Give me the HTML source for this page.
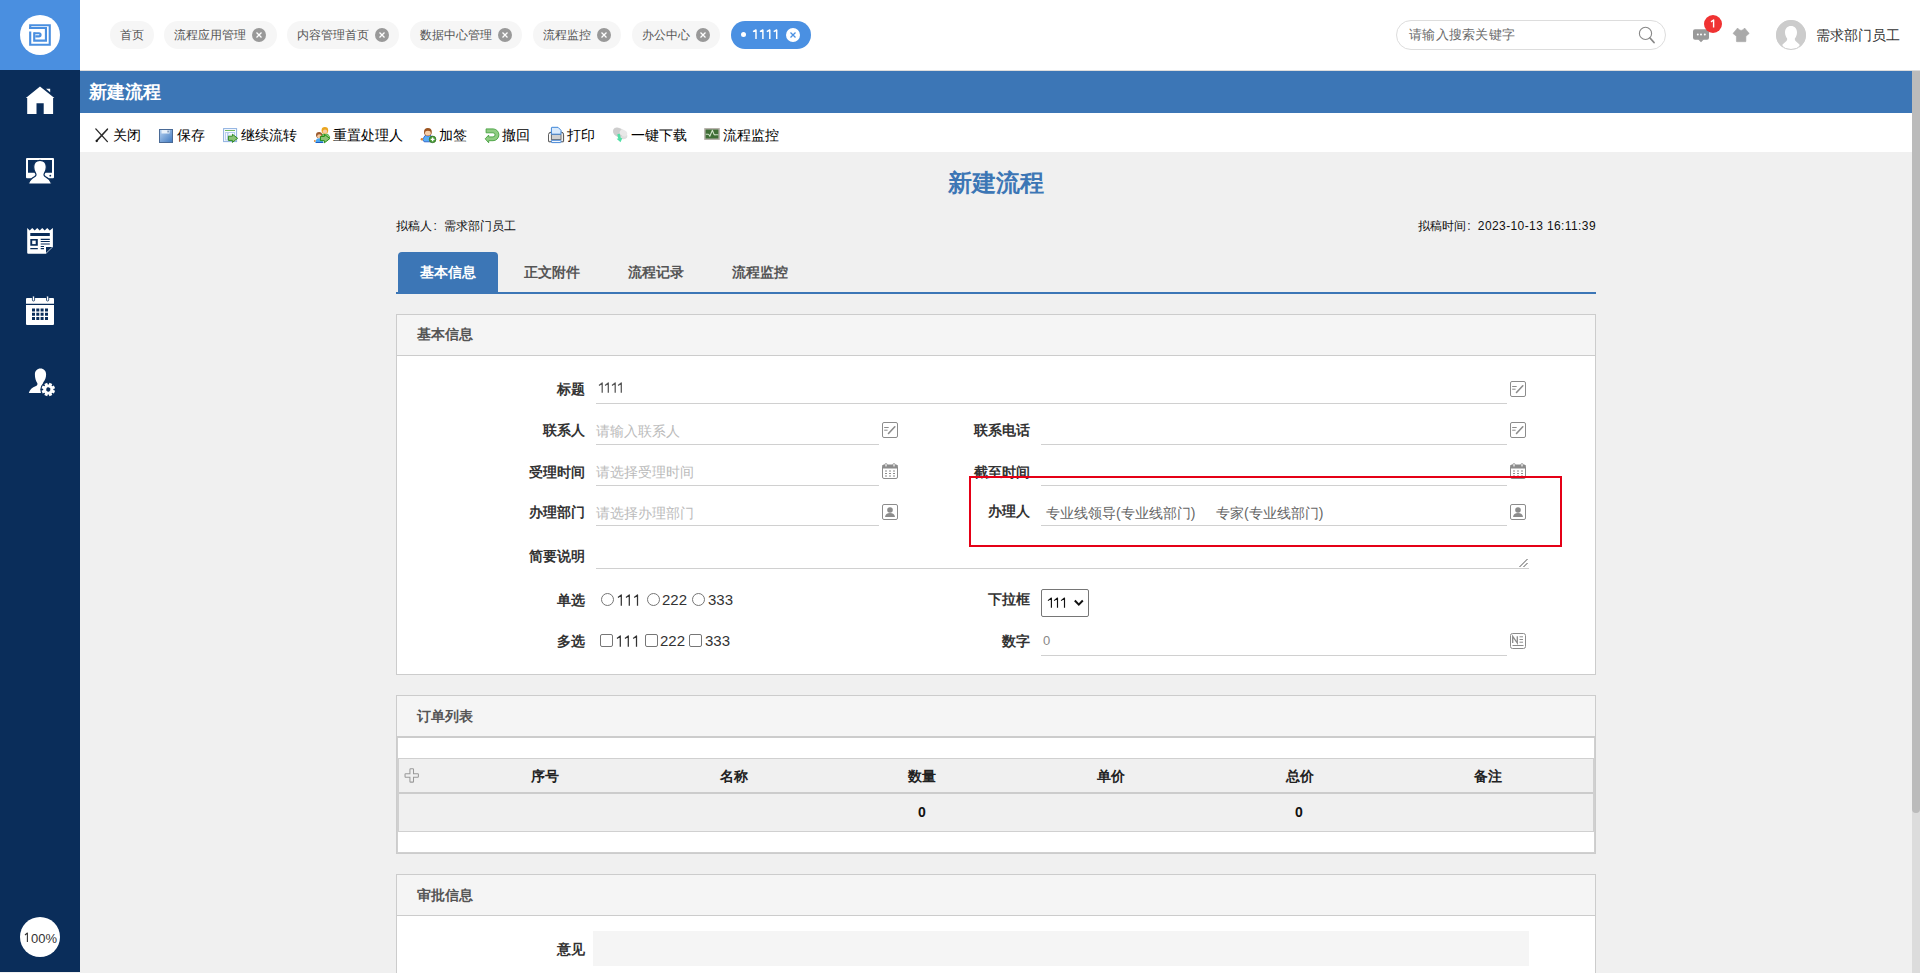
<!DOCTYPE html>
<html><head><meta charset="utf-8">
<style>
*{margin:0;padding:0;box-sizing:border-box}
html,body{width:1920px;height:973px;overflow:hidden;background:#f0f0f0;font-family:"Liberation Sans",sans-serif;color:#333}
.a{position:absolute}
.t{position:absolute;white-space:nowrap;line-height:1}
.tab{position:absolute;top:21px;height:28px;line-height:28px;border-radius:14px;background:#f6f6f6;color:#555;font-size:12px;padding-left:10px;white-space:nowrap}
.tab .x{position:absolute;top:7px;width:14px;height:14px;border-radius:50%;background:#999}
.tab .x svg{position:absolute;left:0;top:0}
.tb{position:absolute;top:128px;font-size:14px;line-height:14px;color:#000;white-space:nowrap}
.ic{position:absolute}
.lbl{position:absolute;font-size:14px;line-height:14px;font-weight:bold;color:#333;white-space:nowrap;text-align:right}
.ul{position:absolute;height:1px;background:#d0d0d0}
.ph{position:absolute;font-size:14px;line-height:14px;color:#bbb;white-space:nowrap}
.panel{position:absolute;left:396px;width:1200px;border:1px solid #ddd;background:#fff}
.ph2{position:absolute;left:0;top:0;width:100%;background:#f5f5f5;border-bottom:1px solid #ddd}
.sh{position:absolute;left:20px;font-size:14px;line-height:14px;font-weight:bold;color:#555;white-space:nowrap}
</style></head><body>
<!-- HEADER -->
<div class="a" style="left:0;top:0;width:1920px;height:70px;background:#fff"></div>
<div class="a" style="left:0;top:0;width:80px;height:70px;background:#4a8fe0"></div>
<div class="a" style="left:20px;top:15px;width:40px;height:40px;border-radius:50%;background:#fff"></div>
<svg class="a" style="left:0;top:0" width="80" height="70" viewBox="0 0 80 70">
<g fill="none" stroke="#4a8fe0" stroke-width="2.15">
<path d="M30.2 29.1 V25.2 H49.75 V44.75 H30.2 V31.5"/>
<path d="M29.14 28 H45.95 V40.65 H34.22 V32.2"/>
<path d="M34.22 33.25 H39 A1.55 1.55 0 0 1 39 36.35 H35.3"/>
</g>
</svg>
<div class="a" style="left:80px;top:70px;width:1840px;height:1px;background:#ddd"></div>

<div class="tab" style="left:110px;width:44px">首页</div>
<div class="tab" style="left:164px;width:113px">流程应用管理<span class="x" style="left:88px"><svg width="14" height="14"><path d="M4.5 4.5L9.5 9.5M9.5 4.5L4.5 9.5" stroke="#fff" stroke-width="1.3"/></svg></span></div>
<div class="tab" style="left:287px;width:112px">内容管理首页<span class="x" style="left:88px"><svg width="14" height="14"><path d="M4.5 4.5L9.5 9.5M9.5 4.5L4.5 9.5" stroke="#fff" stroke-width="1.3"/></svg></span></div>
<div class="tab" style="left:410px;width:112px">数据中心管理<span class="x" style="left:88px"><svg width="14" height="14"><path d="M4.5 4.5L9.5 9.5M9.5 4.5L4.5 9.5" stroke="#fff" stroke-width="1.3"/></svg></span></div>
<div class="tab" style="left:533px;width:88px">流程监控<span class="x" style="left:64px"><svg width="14" height="14"><path d="M4.5 4.5L9.5 9.5M9.5 4.5L4.5 9.5" stroke="#fff" stroke-width="1.3"/></svg></span></div>
<div class="tab" style="left:632px;width:88px">办公中心<span class="x" style="left:64px"><svg width="14" height="14"><path d="M4.5 4.5L9.5 9.5M9.5 4.5L4.5 9.5" stroke="#fff" stroke-width="1.3"/></svg></span></div>
<div class="tab" style="left:731px;width:80px;background:#4a90e2;color:#fff;font-size:13px"><span class="a" style="left:10px;top:10.5px;width:5px;height:5px;border-radius:50%;background:#fff"></span><span class="x" style="left:55px;background:#fff"><svg width="14" height="14"><path d="M4.5 4.5L9.5 9.5M9.5 4.5L4.5 9.5" stroke="#4a90e2" stroke-width="1.3"/></svg></span></div>

<svg class="a" style="left:751.30px;top:28.10px" width="28.70" height="12.90"><path d="M2.00 3.70L5.00 2.00V10.90M8.90 3.70L11.90 2.00V10.90M15.80 3.70L18.80 2.00V10.90M22.70 3.70L25.70 2.00V10.90" fill="none" stroke="#fff" stroke-width="1.45" stroke-linejoin="round"/></svg>
<div class="a" style="left:1396px;top:20px;width:270px;height:30px;border:1px solid #ddd;border-radius:15px;background:#fff"></div>
<div class="t" style="left:1409px;top:27.5px;font-size:13px;letter-spacing:0.3px;color:#6a6a6a">请输入搜索关键字</div>
<svg class="a" style="left:1636px;top:24px" width="22" height="22" viewBox="0 0 22 22"><circle cx="9.5" cy="9.4" r="6.1" fill="none" stroke="#888" stroke-width="1.1"/><path d="M14 14 L18 18.5" stroke="#888" stroke-width="1.8" stroke-linecap="round"/></svg>
<svg class="a" style="left:1690px;top:26px" width="22" height="20" viewBox="0 0 22 20"><rect x="3" y="3.3" width="16" height="10.5" rx="2" fill="#999"/><path d="M8 13.2 L11 16.3 L14 13.2Z" fill="#999"/><circle cx="7.8" cy="8.4" r="1" fill="#fff"/><circle cx="11" cy="8.4" r="1" fill="#fff"/><circle cx="14.8" cy="8.4" r="1" fill="#fff"/></svg>
<div class="a" style="left:1704px;top:15px;width:18px;height:18px;border-radius:50%;background:#f03232"></div><svg class="a" style="left:1708.70px;top:18.30px" width="7.60" height="11.60"><path d="M2.00 3.80L4.60 2.00V9.60" fill="none" stroke="#fff" stroke-width="1.4" stroke-linejoin="round"/></svg>
<svg class="a" style="left:1730px;top:26px" width="22" height="18" viewBox="0 0 22 18"><path d="M7.6 2 Q9 4.4 11.1 4.4 Q13.2 4.4 14.6 2 L19.2 7.4 L15.9 10.3 V15.2 Q15.9 15.7 15.4 15.7 H6.9 Q6.4 15.7 6.4 15.2 V10.3 L3 7.4 Z" fill="#aaa" stroke="#aaa" stroke-width="0.6" stroke-linejoin="round"/></svg>
<svg class="a" style="left:1776px;top:20px" width="30" height="30" viewBox="0 0 30 30"><defs><clipPath id="av"><circle cx="15" cy="15" r="15"/></clipPath></defs><circle cx="15" cy="15" r="15" fill="#ccc"/><g clip-path="url(#av)"><path d="M15 5.9 C18.6 5.9 21 8.5 21 12.3 C21 15 20 17 19 18.3 C18.6 19.3 18.8 20.3 19.8 21.2 L23.5 24.6 L23.5 31 L6.5 31 L6.5 24.6 L10.2 21.2 C11.2 20.3 11.4 19.3 11 18.3 C10 17 9 15 9 12.3 C9 8.5 11.4 5.9 15 5.9Z" fill="#fff"/></g><circle cx="15" cy="15" r="14.5" fill="none" stroke="#ccc" stroke-width="1"/></svg>
<div class="t" style="left:1816px;top:28px;font-size:14px;color:#333">需求部门员工</div>

<!-- SIDEBAR -->
<div class="a" style="left:0;top:70px;width:80px;height:902px;background:#0a2d5a"></div>

<!-- BLUE BAR -->
<div class="a" style="left:80px;top:71px;width:1832px;height:42px;background:#3c76b6"></div>
<div class="t" style="left:89px;top:83px;font-size:18px;font-weight:bold;color:#fff">新建流程</div>
<!-- TOOLBAR -->
<div class="a" style="left:80px;top:113px;width:1832px;height:39px;background:#fff"></div>

<!-- SCROLLBAR -->
<div class="a" style="left:1912px;top:71px;width:8px;height:902px;background:#dcdcdc"></div>
<div class="a" style="left:1912px;top:71px;width:8px;height:742px;background:#bbb;border-radius:0 0 4px 4px"></div>
<!-- SIDEBAR ICONS -->
<svg class="a" style="left:0;top:70px" width="80" height="340" viewBox="0 70 80 340">
<g fill="#fff">
<path d="M40 86.6 L25.8 98 L27.2 98 L27.2 114 L36.5 114 L36.5 103.3 L43.7 103.3 L43.7 114 L53.1 114 L53.1 98 L54.4 98 Z"/>
<path d="M46 88.8 L50.2 88.8 L50.2 92.2 Z"/>
<path fill-rule="evenodd" d="M27 158 H53 Q54 158 54 159 V177.2 Q54 178.2 53 178.2 H27 Q26 178.2 26 177.2 V159 Q26 158 27 158 Z M28 160 V172.8 H52 V160 Z"/>
<path d="M40 160.3 C43.5 160.3 46.3 162.8 46.3 167 C46.3 170 45.4 172 44.3 173.6 C43.7 174.6 44 175.9 45.5 176.7 C48.3 178.2 50.3 180 51.3 183 L51.3 184 L28.7 184 L28.7 183 C29.7 180 31.7 178.2 34.5 176.7 C36 175.9 36.3 174.6 35.7 173.6 C34.6 172 33.7 170 33.7 167 C33.7 162.8 36.5 160.3 40 160.3Z" stroke="#0a2d5a" stroke-width="1.2"/>
<circle cx="50.3" cy="175.7" r="0.9" fill="#0a2d5a"/>
<path fill-rule="evenodd" d="M27.2 228 L29.7 230.5 L32.2 228 L34.7 230.5 L37.2 228 L39.7 230.5 L42.2 228 L44.7 230.5 L47.2 228 L49.7 230.5 L52.9 228 V247 L46 253.7 H28.2 Q27.2 253.7 27.2 252.7 Z M30.3 233 V236 H49.8 V233 Z M30.3 239 V245.8 H37.8 V239 Z M40.7 238.8 V239.9 H49.8 V238.8Z M40.7 241 V242.1 H49.8 V241Z M40.7 243.4 V244.6 H49.8 V243.4Z M40.7 246 V247 H44 V246Z M40.7 248.1 V249.2 H44 V248.1Z M30.3 248.1 V249.2 H37.8 V248.1Z M46 247 V253 L52.2 247Z"/>
<rect x="32.2" y="240.6" width="3.5" height="3.5" fill="#fff"/>
<path fill-rule="evenodd" d="M27 298 H53 Q54 298 54 299 V303.8 H26 V299 Q26 298 27 298Z"/>
<rect x="32.4" y="296" width="2.2" height="5" rx="1" stroke="#0a2d5a" stroke-width="0.8"/>
<rect x="46.5" y="296" width="2.2" height="5" rx="1" stroke="#0a2d5a" stroke-width="0.8"/>
<path fill-rule="evenodd" d="M26 305 H54 V324 Q54 325 53 325 H27 Q26 325 26 324 Z M32 308.6 v3 h3 v-3z M36.3 308.6 v3 h3 v-3z M40.6 308.6 v3 h3 v-3z M45 308.6 v3 h3 v-3z M32 312.8 v3 h3 v-3z M36.3 312.8 v3 h3 v-3z M40.6 312.8 v3 h3 v-3z M45 312.8 v3 h3 v-3z M32 317 v3 h3 v-3z M36.3 317 v3 h3 v-3z M40.6 317 v3 h3 v-3z M45 317 v3 h3 v-3z"/>
<path d="M40.5 368.4 C43.8 368.4 46.1 370.8 46.1 374.5 C46.1 377.5 45 380 43.5 382 C42.8 383 43 384 43.5 385 L42 393 L28.8 393 C29.8 389.5 32 387.5 36 386 C37.5 385.3 37.8 384 37.2 383 C35.8 381 34.9 378 34.9 374.5 C34.9 370.8 37.2 368.4 40.5 368.4Z"/>
<circle cx="48.3" cy="389.5" r="8" fill="#0a2d5a"/>
<g transform="translate(48.3 389.5) rotate(22.5)"><path d="M4.88 -1.49 L6.72 -1.55 L6.72 1.55 L4.88 1.49 L4.50 2.39 L5.85 3.66 L3.66 5.85 L2.39 4.50 L1.49 4.88 L1.55 6.72 L-1.55 6.72 L-1.49 4.88 L-2.39 4.50 L-3.66 5.85 L-5.85 3.66 L-4.50 2.39 L-4.88 1.49 L-6.72 1.55 L-6.72 -1.55 L-4.88 -1.49 L-4.50 -2.39 L-5.85 -3.66 L-3.66 -5.85 L-2.39 -4.50 L-1.49 -4.88 L-1.55 -6.72 L1.55 -6.72 L1.49 -4.88 L2.39 -4.50 L3.66 -5.85 L5.85 -3.66 L4.50 -2.39Z"/><circle cx="0" cy="0" r="2.1" fill="#0a2d5a"/></g>
</g>
</svg>
<div class="a" style="left:20px;top:917px;width:40px;height:40px;border-radius:50%;background:#fff;color:#333;font-size:13px;line-height:40px;padding-top:1px;text-align:center"></div><svg class="a" style="left:22.90px;top:930.90px" width="7.40" height="13.10"><path d="M2.00 4.00L4.40 2.00V11.10" fill="none" stroke="#333" stroke-width="1.1" stroke-linejoin="round"/></svg><div class="t" style="left:31px;top:932px;font-size:13px;color:#333">00%</div>
<!-- TOOLBAR ITEMS -->
<svg class="a" style="left:94px;top:127px" width="16" height="17" viewBox="0 0 16 17"><path d="M1.8 1.9 L13.4 14.6" stroke="#2a2a2a" stroke-width="1.35" stroke-linecap="round"/><path d="M13.4 2.2 L2.6 13.9" stroke="#2a2a2a" stroke-width="1.6" stroke-linecap="round"/><circle cx="2.7" cy="14" r="1.15" fill="#1a1a1a"/></svg>
<div class="tb" style="left:113px">关闭</div>
<svg class="a" style="left:158px;top:128px" width="16" height="16" viewBox="0 0 16 16"><defs><linearGradient id="sv" x1="0" y1="0" x2="1" y2="1"><stop offset="0" stop-color="#b9d3f2"/><stop offset="1" stop-color="#3f78bf"/></linearGradient></defs><rect x="1.5" y="1.5" width="13" height="13" fill="url(#sv)" stroke="#4a6a96" stroke-width="1"/><rect x="3.5" y="2" width="8" height="3.5" fill="#e8f0fa"/><rect x="9.5" y="2.5" width="1.2" height="2" fill="#5a7aa6"/></svg>
<div class="tb" style="left:177px">保存</div>
<svg class="a" style="left:220px;top:124px" width="24" height="24" viewBox="0 0 24 24"><rect x="3.6" y="4.6" width="13" height="13" fill="#fbfdff" stroke="#8db0e0" stroke-width="1"/><rect x="5" y="6" width="10" height="1" fill="#72bb62"/><rect x="5.6" y="8.5" width="9" height="7.5" fill="none" stroke="#b5cdef" stroke-width="1"/><path d="M7.9 8.5V16" stroke="#b5cdef" stroke-width="1.6"/><path d="M8.2 10.5h3M8.2 12.5h3" stroke="#e6eefa" stroke-width="1"/><path d="M8.4 12.2 H12.4 V10.2 L17.6 14.3 L12.4 18.4 V16.4 H8.4 Z" fill="#8cc276" stroke="#2f8a22" stroke-width="1" stroke-linejoin="round"/></svg>
<div class="tb" style="left:241px">继续流转</div>
<svg class="a" style="left:310px;top:124px" width="24" height="24" viewBox="0 0 24 24"><path d="M12.3 10 H17.6 L19.6 12.6 V14 H12.3Z" fill="#8ad07a" stroke="#2f8a22" stroke-width="0.6"/><circle cx="14.9" cy="6.4" r="3.3" fill="#eaa51f"/><ellipse cx="15" cy="7.6" rx="2.2" ry="2" fill="#f6cba4"/><circle cx="9.1" cy="11" r="3.1" fill="#9a5a2e"/><ellipse cx="9.4" cy="12.2" rx="2.2" ry="2" fill="#f8cba4"/><path d="M5.2 19 Q5.6 14.4 9 14.2 Q12.4 14.4 13.4 19 Z" fill="#4aa6f2"/><path d="M6 18 H13.2 V19 H6Z" fill="#1f5cc0"/><circle cx="4.8" cy="17" r="0.9" fill="#e08a3a"/><path d="M10.4 12.4 H14.4 V10.3 L19.8 14.6 L14.4 18.8 V16.7 H10.4 Z" fill="#8cc276" stroke="#1f8a12" stroke-width="1" stroke-linejoin="round"/></svg>
<div class="tb" style="left:333px">重置处理人</div>
<svg class="a" style="left:416px;top:124px" width="24" height="24" viewBox="0 0 24 24"><path d="M6.6 15.4 L9.2 11.4 Q12 12.6 14.8 11.4 L16.8 14 V17 Q16.8 17.8 16 17.8 H8.8 Q7.8 17.8 7.5 17 Z" fill="#58aef6" stroke="#1f4fbf" stroke-width="0.8" stroke-linejoin="round"/><circle cx="5.9" cy="15.2" r="1.2" fill="#e0842e"/><circle cx="11.9" cy="8" r="3.9" fill="#9c5420"/><ellipse cx="11.9" cy="9.2" rx="2.9" ry="2.4" fill="#f7cfa8"/><circle cx="16.6" cy="15.4" r="3.3" fill="#4c9e3a" stroke="#2a6a1a" stroke-width="0.7"/><path d="M14.7 15.4h3.8M16.6 13.5v3.8" stroke="#fff" stroke-width="1.4"/></svg>
<div class="tb" style="left:439px">加签</div>
<svg class="a" style="left:484px;top:127px" width="17" height="18" viewBox="0 0 17 18"><path d="M2.1 1.9 H9 A5.9 5.9 0 0 1 9 13.7 H4.7 V15.8 L1.2 11.8 L4.7 8.1 V9.9 H9 A2.05 2.05 0 0 0 9 5.8 H2.1 Z" fill="#8fcc82" stroke="#46a040" stroke-width="0.9" stroke-linejoin="round"/></svg>
<div class="tb" style="left:502px">撤回</div>
<svg class="a" style="left:544px;top:124px" width="24" height="24" viewBox="0 0 24 24"><path d="M4.6 10.8 Q4.6 8.2 7 8.2 H17.4 Q19.6 8.2 19.6 10.8 V17.4 Q19.6 17.8 19.2 17.8 H5 Q4.6 17.8 4.6 17.4 Z" fill="#ececec" stroke="#3a3a3a" stroke-width="0.9"/><path d="M5.6 10 V16.5" stroke="#fff" stroke-width="1"/><rect x="7.4" y="10.6" width="9.6" height="4.8" fill="#cfcfcf" stroke="#5a5a5a" stroke-width="0.8"/><path d="M7.4 3.8 Q7.4 3.3 7.9 3.3 H14 L17 6.3 V10.2 H7.4 Z" fill="#d9eafc" stroke="#3f86d8" stroke-width="1"/><rect x="7.4" y="16.3" width="9.6" height="2.3" rx="0.6" fill="#f4f8fd" stroke="#4a8ad8" stroke-width="1"/></svg>
<div class="tb" style="left:567px">打印</div>
<svg class="a" style="left:608px;top:124px" width="24" height="24" viewBox="0 0 24 24"><g transform="rotate(33 12.5 9)"><ellipse cx="12.5" cy="9.5" rx="8" ry="4.6" fill="#dedede"/><ellipse cx="10" cy="9.8" rx="5.2" ry="4.2" fill="#cdcdcd"/><ellipse cx="15" cy="7.5" rx="4" ry="3" fill="#e8e8e8"/></g><path d="M10 10.2 Q11.2 9.5 12.6 10 L12.8 14.3 L14.2 14.8 L11.6 18.3 L8.5 14.2 L10.2 14.2 Z" fill="#52e0a6" transform="rotate(-12 11.5 14)"/></svg>
<div class="tb" style="left:631px">一键下载</div>
<svg class="a" style="left:700px;top:124px" width="24" height="20" viewBox="0 0 24 20"><rect x="4.9" y="4.8" width="14.2" height="10.4" fill="#3f6e36" stroke="#b3aea8" stroke-width="1.4"/><path d="M5.8 10.2 H8.3 Q9 10.3 9.8 12.2 L12.4 6.3 L14 10.4 Q14.5 11 15.6 10.8 H18.4" fill="none" stroke="#cfe2c8" stroke-width="1.1" stroke-linejoin="round"/></svg>
<div class="tb" style="left:723px">流程监控</div>

<!-- PAGE HEAD -->
<div class="t" style="left:948px;top:171px;font-size:24px;font-weight:bold;color:#3c76b5">新建流程</div>
<div class="t" style="left:396px;top:220px;font-size:12px;color:#111">拟稿人<span style="display:inline-block;width:12px;padding-left:1.5px">:</span>需求部门员工</div>
<div class="t" style="right:324px;top:220px;font-size:12px;color:#111">拟稿时间<span style="display:inline-block;width:12px;padding-left:1.5px">:</span><span style="letter-spacing:0.4px">2023-10-13 16:11:39</span></div>

<div class="a" style="left:398px;top:252px;width:100px;height:40px;background:#3c76b6;border-radius:4px 4px 0 0"></div>
<div class="t" style="left:420px;top:265px;font-size:14px;font-weight:bold;color:#fff">基本信息</div>
<div class="t" style="left:524px;top:265px;font-size:14px;font-weight:bold;color:#555">正文附件</div>
<div class="t" style="left:628px;top:265px;font-size:14px;font-weight:bold;color:#555">流程记录</div>
<div class="t" style="left:732px;top:265px;font-size:14px;font-weight:bold;color:#555">流程监控</div>
<div class="a" style="left:396px;top:292px;width:1200px;height:2px;background:#3c76b6"></div>
<!-- PANEL 1 -->
<div class="a" style="left:396px;top:314px;width:1200px;height:361px;border:1px solid #ccc;background:#fff"></div>
<div class="a" style="left:397px;top:315px;width:1198px;height:41px;background:#f5f5f5;border-bottom:1px solid #ccc"></div>
<div class="t" style="left:417px;top:327px;font-size:14px;font-weight:bold;color:#555">基本信息</div>

<div class="lbl" style="right:1335px;top:382px">标题</div>
<svg class="a" style="left:597.20px;top:381.20px" width="27.30" height="13.70"><path d="M2.00 4.60L5.20 2.00V11.70M8.10 4.60L11.30 2.00V11.70M15.00 4.60L18.20 2.00V11.70M21.10 4.60L24.30 2.00V11.70" fill="none" stroke="#555" stroke-width="1.25" stroke-linejoin="round"/></svg>
<div class="ul" style="left:596px;top:403px;width:911px"></div>

<div class="lbl" style="right:1335px;top:423px">联系人</div>
<div class="ph" style="left:596px;top:424px">请输入联系人</div>
<div class="ul" style="left:596px;top:444px;width:283px"></div>
<div class="lbl" style="right:890px;top:423px">联系电话</div>
<div class="ul" style="left:1041px;top:444px;width:466px"></div>

<div class="lbl" style="right:1335px;top:465px">受理时间</div>
<div class="ph" style="left:596px;top:465px">请选择受理时间</div>
<div class="ul" style="left:596px;top:485px;width:283px"></div>
<div class="lbl" style="right:890px;top:465px">截至时间</div>
<div class="ul" style="left:1041px;top:485px;width:466px"></div>

<div class="lbl" style="right:1335px;top:505px">办理部门</div>
<div class="ph" style="left:596px;top:506px">请选择办理部门</div>
<div class="ul" style="left:596px;top:525px;width:283px"></div>
<div class="lbl" style="right:890px;top:504px">办理人</div>
<div class="t" style="left:1046px;top:506px;font-size:14px;color:#666">专业线领导(专业线部门)</div>
<div class="t" style="left:1216px;top:506px;font-size:14px;color:#666">专家(专业线部门)</div>
<div class="ul" style="left:1041px;top:525px;width:466px"></div>

<div class="lbl" style="right:1335px;top:549px">简要说明</div>
<div class="ul" style="left:596px;top:568px;width:933px"></div>
<svg class="a" style="left:1518px;top:558px" width="11" height="10" viewBox="0 0 11 10"><path d="M1.5 9 L9.5 1 M5.5 9 L9.5 5" stroke="#555" stroke-width="1"/></svg>

<div class="lbl" style="right:1335px;top:593px">单选</div>
<div class="lbl" style="right:1335px;top:634px">多选</div>
<div class="lbl" style="right:890px;top:592px">下拉框</div>
<div class="lbl" style="right:890px;top:634px">数字</div>
<div class="t" style="left:1043px;top:634px;font-size:13px;color:#888">0</div>
<div class="ul" style="left:1041px;top:655px;width:466px"></div>

<!-- radios -->
<div class="a" style="left:601px;top:593px;width:13px;height:13px;border:1px solid #767676;border-radius:50%"></div>
<svg class="a" style="left:616.20px;top:593.20px" width="24.50" height="14.80"><path d="M2.00 4.50L5.30 2.00V12.80M10.00 4.50L13.30 2.00V12.80M18.20 4.50L21.50 2.00V12.80" fill="none" stroke="#333" stroke-width="1.25" stroke-linejoin="round"/></svg>
<div class="a" style="left:647px;top:593px;width:13px;height:13px;border:1px solid #767676;border-radius:50%"></div>
<div class="t" style="left:662px;top:592px;font-size:15px;color:#333">222</div>
<div class="a" style="left:692px;top:593px;width:13px;height:13px;border:1px solid #767676;border-radius:50%"></div>
<div class="t" style="left:708px;top:592px;font-size:15px;color:#333">333</div>
<!-- checkboxes -->
<div class="a" style="left:600px;top:634px;width:13px;height:13px;border:1px solid #767676;border-radius:2px"></div>
<svg class="a" style="left:615.40px;top:634.20px" width="24.50" height="14.80"><path d="M2.00 4.50L5.30 2.00V12.80M10.00 4.50L13.30 2.00V12.80M18.20 4.50L21.50 2.00V12.80" fill="none" stroke="#333" stroke-width="1.25" stroke-linejoin="round"/></svg>
<div class="a" style="left:645px;top:634px;width:13px;height:13px;border:1px solid #767676;border-radius:2px"></div>
<div class="t" style="left:660px;top:633px;font-size:15px;color:#333">222</div>
<div class="a" style="left:689px;top:634px;width:13px;height:13px;border:1px solid #767676;border-radius:2px"></div>
<div class="t" style="left:705px;top:633px;font-size:15px;color:#333">333</div>
<!-- select -->
<div class="a" style="left:1041px;top:589px;width:48px;height:28px;border:1px solid #767676;border-radius:2px;background:#fff"></div>
<svg class="a" style="left:1046.00px;top:596.20px" width="21.50" height="13.70"><path d="M2.00 4.60L5.40 2.00V11.70M8.10 4.60L11.50 2.00V11.70M15.10 4.60L18.50 2.00V11.70" fill="none" stroke="#111" stroke-width="1.15" stroke-linejoin="round"/></svg>
<svg class="a" style="left:1073px;top:599px" width="12" height="8" viewBox="0 0 12 8"><path d="M1.8 1.5 L5.8 5.6 L9.8 1.5" fill="none" stroke="#111" stroke-width="2"/></svg>

<!-- form icons -->
<svg class="a" style="left:1510px;top:381px" width="16" height="16" viewBox="0 0 16 16"><rect x="0.5" y="0.5" width="15" height="15" rx="1.5" fill="#fff" stroke="#8c8c8c"/><path d="M2.2 5.5h4.5M2.2 8.2h3.4" stroke="#8c8c8c" stroke-width="1"/><path d="M6.5 11.5 L12.8 4.8" stroke="#8c8c8c" stroke-width="1.6" stroke-linecap="round"/></svg>
<svg class="a" style="left:882px;top:422px" width="16" height="16" viewBox="0 0 16 16"><rect x="0.5" y="0.5" width="15" height="15" rx="1.5" fill="#fff" stroke="#8c8c8c"/><path d="M2.2 5.5h4.5M2.2 8.2h3.4" stroke="#8c8c8c" stroke-width="1"/><path d="M6.5 11.5 L12.8 4.8" stroke="#8c8c8c" stroke-width="1.6" stroke-linecap="round"/></svg>
<svg class="a" style="left:1510px;top:422px" width="16" height="16" viewBox="0 0 16 16"><rect x="0.5" y="0.5" width="15" height="15" rx="1.5" fill="#fff" stroke="#8c8c8c"/><path d="M2.2 5.5h4.5M2.2 8.2h3.4" stroke="#8c8c8c" stroke-width="1"/><path d="M6.5 11.5 L12.8 4.8" stroke="#8c8c8c" stroke-width="1.6" stroke-linecap="round"/></svg>
<svg class="a" style="left:882px;top:463px" width="16" height="16" viewBox="0 0 16 16"><rect x="0.5" y="2" width="15" height="13.5" rx="1.5" fill="#fff" stroke="#8c8c8c"/><rect x="0.5" y="2" width="15" height="3.5" fill="#8c8c8c"/><rect x="3" y="0.5" width="2" height="3.5" rx="1" fill="#fff" stroke="#8c8c8c" stroke-width="0.8"/><rect x="11" y="0.5" width="2" height="3.5" rx="1" fill="#fff" stroke="#8c8c8c" stroke-width="0.8"/><path d="M3 8h2M7 8h2M11 8h2M3 10.5h2M7 10.5h2M11 10.5h2M3 13h2M7 13h2M11 13h2" stroke="#8c8c8c" stroke-width="1"/></svg>
<svg class="a" style="left:1510px;top:463px" width="16" height="16" viewBox="0 0 16 16"><rect x="0.5" y="2" width="15" height="13.5" rx="1.5" fill="#fff" stroke="#8c8c8c"/><rect x="0.5" y="2" width="15" height="3.5" fill="#8c8c8c"/><rect x="3" y="0.5" width="2" height="3.5" rx="1" fill="#fff" stroke="#8c8c8c" stroke-width="0.8"/><rect x="11" y="0.5" width="2" height="3.5" rx="1" fill="#fff" stroke="#8c8c8c" stroke-width="0.8"/><path d="M3 8h2M7 8h2M11 8h2M3 10.5h2M7 10.5h2M11 10.5h2M3 13h2M7 13h2M11 13h2" stroke="#8c8c8c" stroke-width="1"/></svg>
<svg class="a" style="left:882px;top:504px" width="16" height="16" viewBox="0 0 16 16"><rect x="0.5" y="0.5" width="15" height="15" rx="1.5" fill="#fff" stroke="#8c8c8c"/><circle cx="8" cy="6" r="2.8" fill="#8c8c8c"/><path d="M3 13 Q3.5 9 8 9 Q12.5 9 13 13Z" fill="#8c8c8c"/></svg>
<svg class="a" style="left:1510px;top:504px" width="16" height="16" viewBox="0 0 16 16"><rect x="0.5" y="0.5" width="15" height="15" rx="1.5" fill="#fff" stroke="#8c8c8c"/><circle cx="8" cy="6" r="2.8" fill="#8c8c8c"/><path d="M3 13 Q3.5 9 8 9 Q12.5 9 13 13Z" fill="#8c8c8c"/></svg>
<svg class="a" style="left:1510px;top:633px" width="16" height="16" viewBox="0 0 16 16"><rect x="0.5" y="0.5" width="15" height="15" rx="2" fill="#fff" stroke="#8c8c8c"/><path d="M2.7 10 V3.3 L7.3 10 V3.3" fill="none" stroke="#8c8c8c" stroke-width="1.3"/><path d="M9.5 3.8h3.5M9.5 6.5h3.5M9.5 9.2h3.5M2.5 12.5h11" stroke="#8c8c8c" stroke-width="1"/></svg>

<!-- red box -->
<div class="a" style="left:969px;top:476px;width:593px;height:71px;border:2px solid #e50016"></div>
<!-- PANEL 2 -->
<div class="a" style="left:396px;top:695px;width:1200px;height:159px;border:1px solid #ccc;background:#fff"></div>
<div class="a" style="left:397px;top:696px;width:1198px;height:42px;background:#f5f5f5;border-bottom:2px solid #ccc"></div>
<div class="a" style="left:397px;top:738px;width:1198px;height:115px;border:1px solid #d0d0d0;border-top:0"></div>
<div class="t" style="left:417px;top:709px;font-size:14px;font-weight:bold;color:#555">订单列表</div>
<div class="a" style="left:398px;top:758px;width:1196px;height:74px;background:#f0f0f0;border:1px solid #d0d0d0"></div>
<div class="a" style="left:399px;top:792px;width:1194px;height:2px;background:#ccc"></div>
<svg class="a" style="left:403.5px;top:768px" width="16" height="16" viewBox="0 0 17 17"><path d="M6.3 1.5 Q6.3 0.8 7 0.8 H9.4 Q10.1 0.8 10.1 1.5 V6 H14.6 Q15.3 6 15.3 6.7 V9.1 Q15.3 9.8 14.6 9.8 H10.1 V14.3 Q10.1 15 9.4 15 H7 Q6.3 15 6.3 14.3 V9.8 H1.8 Q1.1 9.8 1.1 9.1 V6.7 Q1.1 6 1.8 6 H6.3Z" fill="none" stroke="#999" stroke-width="1.1"/></svg>
<div class="t" style="left:531px;top:769px;font-size:14px;font-weight:bold;color:#222">序号</div>
<div class="t" style="left:720px;top:769px;font-size:14px;font-weight:bold;color:#222">名称</div>
<div class="t" style="left:908px;top:769px;font-size:14px;font-weight:bold;color:#222">数量</div>
<div class="t" style="left:1097px;top:769px;font-size:14px;font-weight:bold;color:#222">单价</div>
<div class="t" style="left:1286px;top:769px;font-size:14px;font-weight:bold;color:#222">总价</div>
<div class="t" style="left:1474px;top:769px;font-size:14px;font-weight:bold;color:#222">备注</div>
<div class="t" style="left:918px;top:805px;font-size:14px;font-weight:bold;color:#111">0</div>
<div class="t" style="left:1295px;top:805px;font-size:14px;font-weight:bold;color:#111">0</div>

<!-- PANEL 3 -->
<div class="a" style="left:396px;top:874px;width:1200px;height:120px;border:1px solid #ccc;background:#fff"></div>
<div class="a" style="left:397px;top:875px;width:1198px;height:41px;background:#f5f5f5;border-bottom:1px solid #ccc"></div>
<div class="t" style="left:417px;top:888px;font-size:14px;font-weight:bold;color:#555">审批信息</div>
<div class="lbl" style="right:1335px;top:942px">意见</div>
<div class="a" style="left:593px;top:931px;width:936px;height:35px;background:#f5f5f5"></div>
</body></html>
